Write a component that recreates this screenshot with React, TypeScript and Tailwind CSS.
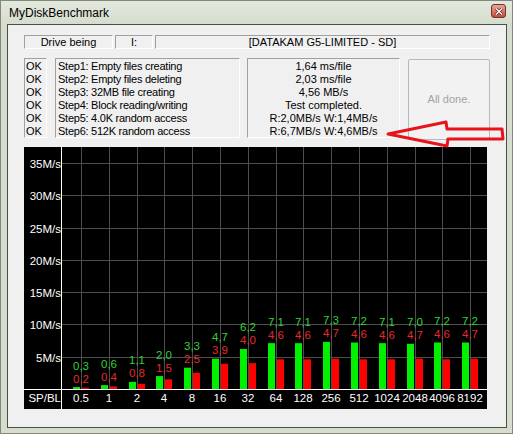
import React from 'react';

const green = [0.3, 0.6, 1.1, 2.0, 3.3, 4.7, 6.2, 7.1, 7.1, 7.3, 7.2, 7.1, 7.0, 7.2, 7.2];
const red = [0.2, 0.4, 0.8, 1.5, 2.5, 3.9, 4.0, 4.6, 4.6, 4.7, 4.6, 4.6, 4.7, 4.6, 4.7];
const sizes = ['0.5', '1', '2', '4', '8', '16', '32', '64', '128', '256', '512', '1024', '2048', '4096', '8192'];

const steps = [
  'Step1: Empty files creating',
  'Step2: Empty files deleting',
  'Step3: 32MB file creating',
  'Step4: Block reading/writing',
  'Step5: 4.0K random access',
  'Step6: 512K random access',
];
const results = ['1,64 ms/file', '2,03 ms/file', '4,56 MB/s', 'Test completed.', 'R:2,0MB/s W:1,4MB/s', 'R:6,7MB/s W:4,6MB/s'];

const sunken = 'border border-t-[#a0a0a0] border-l-[#a0a0a0] border-b-white border-r-white';
const fmt = (v: number) => v.toFixed(1).replace('.', ',');

function Chart() {
  const Y0 = 242;
  const k = 6.457;
  const col = (i: number) => 57 + 27.8 * i;
  const font = "'Liberation Sans', Arial, sans-serif";

  return (
    <svg width="463" height="262" className="block bg-black" fontFamily={font}>
      {[5, 10, 15, 20, 25, 30, 35].map((v) => {
        const y = Math.round(Y0 - v * k) + 0.5;
        return (
          <g key={v}>
            <line x1={38} x2={463} y1={y} y2={y} stroke="#4d4d4d" />
            <text x={37} y={y + 4.5} textAnchor="end" fill="#fff" fontSize="11.5">{v}M/s</text>
          </g>
        );
      })}
      {sizes.map((s, i) => {
        const c = Math.round(col(i));
        const gh = green[i] * k;
        const rh = red[i] * k;
        const top = Y0 - gh;
        return (
          <g key={s}>
            <line x1={c + 0.5} x2={c + 0.5} y1={0} y2={Y0} stroke="#4d4d4d" />
            <rect x={c - 8} y={Y0 - gh} width={7} height={gh} fill="#00f000" />
            <rect x={c + 1} y={Y0 - rh} width={7} height={rh} fill="#ff0000" />
            <text x={c} y={top - 17.5} textAnchor="middle" fill="#33d333" fontSize="11.5">{fmt(green[i])}</text>
            <text x={c} y={top - 4.5} textAnchor="middle" fill="#e42a2a" fontSize="11.5">{fmt(red[i])}</text>
            <text x={c} y={255} textAnchor="middle" fill="#fff" fontSize="11.5">{s}</text>
          </g>
        );
      })}
      <line x1={37.5} x2={37.5} y1={0} y2={262} stroke="#fff" />
      <line x1={0} x2={463} y1={242.5} y2={242.5} stroke="#fff" />
      <text x={37} y={255} textAnchor="end" fill="#fff" fontSize="11.5">SP/BL</text>
    </svg>
  );
}

export default function App() {
  return (
    <div className="relative w-[513px] h-[434px] bg-[#d6ddce] border border-[#7f8a7a] flex flex-col font-['Liberation_Sans',Arial,sans-serif] text-black">
      {/* title bar */}
      <div className="h-[23px] flex items-center justify-between pl-[8px] pr-[6px] bg-gradient-to-b from-[#e2e8dc] to-[#d6ddce]">
        <span className="text-[12px] leading-none">MyDiskBenchmark</span>
        <div className="w-[15px] h-[14px] mt-[-3px] rounded-[3px] border border-[#73342b] bg-gradient-to-b from-[#e9a597] to-[#c4493a] flex items-center justify-center">
          <svg width="8" height="7" viewBox="0 0 8 7">
            <path d="M1 0.5 L7 6.5 M7 0.5 L1 6.5" stroke="#5a1d16" strokeWidth="2.6" />
            <path d="M1 0.5 L7 6.5 M7 0.5 L1 6.5" stroke="#fff" strokeWidth="1.4" />
          </svg>
        </div>
      </div>

      {/* client area */}
      <div className="flex-1 pl-[6px] pr-[5px] pb-[5px] flex">
        <div className="flex-1 border border-[#4a4f48] bg-[#f0f0f0] pt-[10px] px-[16px] flex flex-col text-[11px]">
          <div className="flex gap-[2px] h-[14px] leading-[12px]">
            <div className={`w-[89px] text-center ${sunken}`}>Drive being</div>
            <div className={`w-[38px] text-center ${sunken}`}>I:</div>
            <div className={`flex-1 text-center ${sunken}`}>[DATAKAM G5-LIMITED - SD]</div>
          </div>

          <div className="flex items-start mt-[9px] h-[80px]">
            <div className={`w-[23px] h-[80px] pl-[1px] pt-[1px] leading-[13px] overflow-hidden ${sunken}`}>
              {steps.map((_, i) => (
                <div key={i}>OK</div>
              ))}
            </div>
            <div className={`ml-[8px] w-[185px] h-[80px] pl-[2px] pt-[1px] leading-[13px] tracking-[-0.25px] overflow-hidden ${sunken}`}>
              {steps.map((s) => (
                <div key={s} className="whitespace-nowrap">{s}</div>
              ))}
            </div>
            <div className={`ml-[7px] w-[153px] h-[80px] pt-[1px] leading-[13px] text-center overflow-hidden ${sunken}`}>
              {results.map((r) => (
                <div key={r} className="whitespace-nowrap">{r}</div>
              ))}
            </div>
            <div className="ml-[8px] mt-[1px] flex-1 h-[81px] rounded-[2px] border border-[#b5b9bc] bg-[#f2f2f2] flex items-center justify-center text-[#a3a3a3]">
              All done.
            </div>
          </div>

          <div className="mt-[9px]">
            <Chart />
          </div>
        </div>
      </div>

      {/* annotation arrow */}
      <svg className="absolute left-[-1px] top-[-1px] pointer-events-none" width="513" height="434">
        <polygon
          points="388,134 446,122 447,129 502,129 503,139 448,139 447,146"
          fill="none"
          stroke="#e8141c"
          strokeWidth="3"
          strokeLinejoin="round"
        />
      </svg>
    </div>
  );
}
